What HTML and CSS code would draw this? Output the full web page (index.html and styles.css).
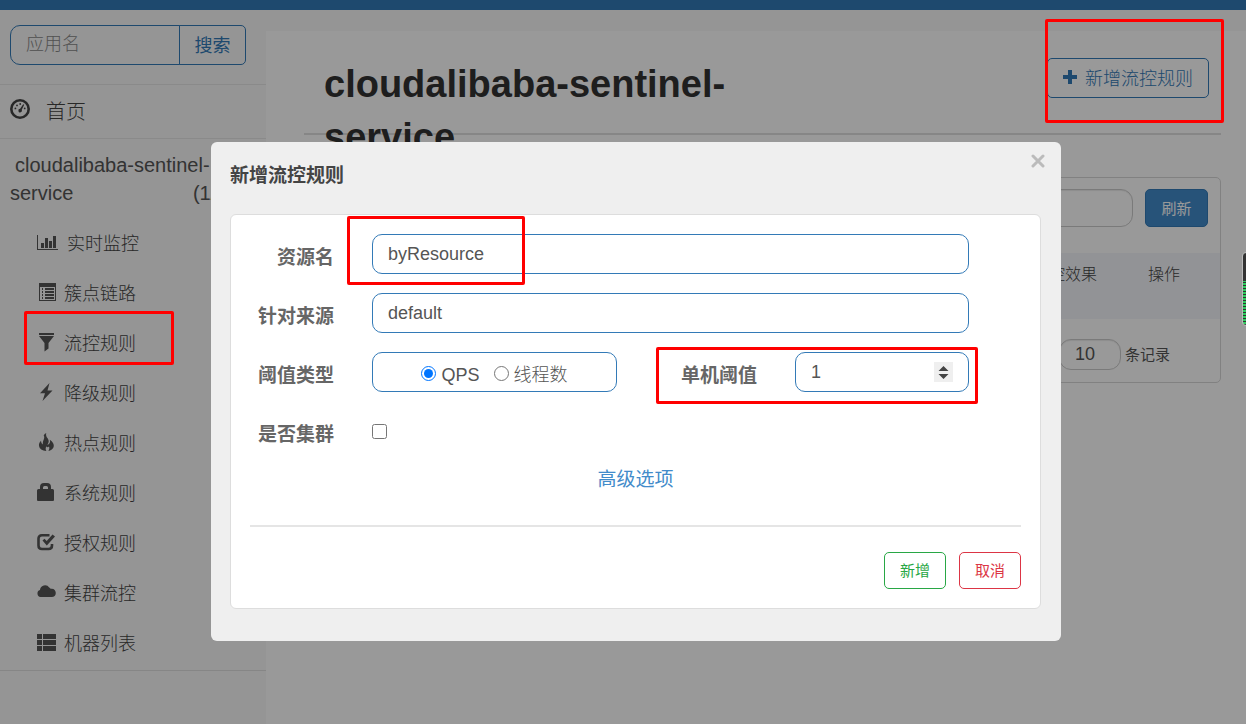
FILE: index.html
```html
<!DOCTYPE html>
<html lang="zh-CN">
<head>
  <meta charset="utf-8">
  <title>Sentinel Dashboard</title>
  <link rel="stylesheet" href="styles.css">
</head>
<body>

  <div class="topbar"></div>

  <div class="wrapper">
    <div class="sidebar">
      <form class="search">
        <input class="search-input" type="text" placeholder="应用名" aria-label="应用名">
        <button class="search-btn" type="button">搜索</button>
      </form>
      <a class="home" href="#">
        <svg class="icon-home" viewBox="0 0 20 20"><circle cx="10" cy="10" r="8.7" fill="none" stroke="currentColor" stroke-width="2.6"/><g fill="currentColor"><circle cx="5.400" cy="9.400" r=".9"/><circle cx="7" cy="6.400" r=".9"/><circle cx="10.200" cy="5" r=".9"/><circle cx="14.700" cy="9.400" r=".9"/><path d="M13.200 5.200l1 .6-2.400 5a1.800 1.800 0 1 1-1.700-1z"/></g></svg>
        <span>首页</span>
      </a>
      <a class="app" href="#">cloudalibaba-sentinel-service<span class="app-count">(1/1)</span></a>
      <ul class="menu">
        <li><a href="#"><svg class="icon wide" viewBox="0 0 21 18"><path fill="currentColor" d="M0 2h1v14H21V17H0zM4 10h3v5H4zM8 5h3v10H8zM12 8h3v7h-3zM16 3h3v12h-3z"/></svg>实时监控</a></li>
        <li><a href="#"><svg class="icon" viewBox="0 0 18 18"><path fill="currentColor" fill-rule="evenodd" d="M2 0h17v18H2zM3 4v13h15V4zM5 5h1v2H5zM8 5h9v2H8zM5 8h1v2H5zM8 8h9v2H8zM5 11h1v2H5zM8 11h9v2H8zM5 14h1v2H5zM8 14h9v2H8z"/></svg>簇点链路</a></li>
        <li><a href="#"><svg class="icon" viewBox="0 0 18 18"><path fill="currentColor" d="M2 0h15v2H2zM2 3h15l-5.500 7v5.500L7.500 18.500V10z"/></svg>流控规则</a></li>
        <li><a href="#"><svg class="icon" viewBox="0 0 18 18"><path fill="currentColor" d="M12.500 0L3 10.200h5L5.500 18 15.500 7.400h-5z"/></svg>降级规则</a></li>
        <li><a href="#"><svg class="icon" viewBox="0 0 18 18"><path fill="currentColor" d="M9.200 0c-.6 2.600.5 4 1.600 5.600 1.500 2.200 1 4.600-.5 6.200 2.200-.4 3.400-2.400 2.500-5 2.700 1.700 5 4.700 3.600 7.800-.9 2-2.700 3-5 3.400 1-1.400 1.200-2.800.6-4.400-1 1-2.300 1-2.600-.4-.9 1.600-1 3.300.1 4.800C5 17.600 2.500 16 2 13c-.4-2.600 1-4 2-5.200.3 1.600.5 2.900 1.800 3.700C5.500 7 8.400 5.500 6.700 2.500 7.200 1.300 8.200.5 9.200 0z"/></svg>热点规则</a></li>
        <li><a href="#"><svg class="icon" viewBox="0 0 18 18"><path fill="currentColor" fill-rule="evenodd" d="M3 6V4q0-4 4-4h3q4 0 4 4v2h1.500q1.500 0 1.500 1.500V17q0 1-1 1H1q-1 0-1-1V7.500Q0 6 1.500 6zM6 6h5V4.500Q11 3 9.500 3h-2Q6 3 6 4.500z"/></svg>系统规则</a></li>
        <li><a href="#"><svg class="icon" viewBox="0 0 18 18"><path fill="none" stroke="currentColor" stroke-width="2.600" d="M12.500 2.300H5Q1.500 2.300 1.500 5.500v7q0 3.500 3.500 3.500h6.500q3.500 0 3.500-3.500V11"/><path fill="currentColor" d="M5.500 7.500l2-1.800 2.200 2.200L15.500 1.600l2.500 2-8.200 8.800z"/></svg>授权规则</a></li>
        <li><a href="#"><svg class="icon" viewBox="0 0 18 18"><path fill="currentColor" d="M3.500 14A3.600 3.600 0 0 1 3 7 5 5 0 0 1 12.200 4.500a5.500 5.500 0 0 1 1.400 1.300c3-.8 5.200 1.500 5.200 4.100 0 2.400-1.700 4.100-4 4.100z"/></svg>集群流控</a></li>
        <li><a href="#"><svg class="icon" viewBox="0 0 18 18"><path fill="currentColor" d="M0 1h5v5H0zM6 1h13v5H6zM0 7h5v5H0zM6 7h13v5H6zM0 13h5v5H0zM6 13h13v5H6z"/></svg>机器列表</a></li>
      </ul>
    </div>

    <div class="main">
      <div class="page-head">
        <h1>cloudalibaba-sentinel-service</h1>
        <button class="btn-add" type="button">
          <svg class="icon-plus" viewBox="0 0 14 14"><path fill="currentColor" d="M5 0h4v5h5v4H9v5H5V9H0V5h5z"/></svg>
          新增流控规则
        </button>
      </div>
      <div class="card">
        <div class="card-head">
          <input class="gray-input" type="text" aria-label="关键字">
          <button class="btn-refresh" type="button">刷新</button>
        </div>
        <table class="rules">
          <thead>
            <tr><th></th><th class="col-effect">流控效果</th><th class="col-action">操作</th></tr>
          </thead>
        </table>
        <div class="card-foot">
          <input class="gray-input page-size" id="pageSize" type="text" value="10">
          <label for="pageSize">条记录</label>
        </div>
      </div>
    </div>
  </div>

  <div class="overlay">
    <div class="modal" role="dialog" aria-labelledby="modalTitle">
      <div class="modal-head">
        <h2 id="modalTitle">新增流控规则</h2>
        <button class="close" type="button" aria-label="关闭">
          <svg viewBox="0 0 14 14"><path fill="none" stroke="currentColor" stroke-width="3" stroke-linecap="round" d="M2 2l10 10M12 2L2 12"/></svg>
        </button>
      </div>
      <form class="panel">
        <div class="fields">
          <label class="name" for="resource">资源名</label>
          <input class="field full" id="resource" type="text" value="byResource">

          <label class="name" for="limitApp">针对来源</label>
          <input class="field full" id="limitApp" type="text" value="default">

          <span class="name">阈值类型</span>
          <div class="field radios">
            <input type="radio" name="grade" id="qps" checked><label for="qps">QPS</label>
            <input type="radio" name="grade" id="thread"><label for="thread">线程数</label>
          </div>
          <label class="name" for="count">单机阈值</label>
          <div class="field number">
            <input id="count" type="number" value="1">
            <button class="spin" type="button" aria-label="调整">
              <svg viewBox="0 0 19 20"><path fill="#444" d="M4.500 9l5-5 5 5zM4.500 12l5 5 5-5z"/></svg>
            </button>
          </div>

          <label class="name" for="cluster">是否集群</label>
          <input class="check" id="cluster" type="checkbox">
        </div>
        <a class="advanced" href="#">高级选项</a>
        <div class="panel-foot">
          <button class="btn green" type="button">新增</button>
          <button class="btn red" type="button">取消</button>
        </div>
      </form>
    </div>
  </div>

  <!-- red marks -->
  <div class="mark mark-menu"></div>
  <div class="mark mark-add"></div>
  <div class="mark mark-resource"></div>
  <div class="mark mark-count"></div>

  <div class="meter"></div>

</body>
</html>
```
FILE: styles.css
```css
* {
  box-sizing: border-box;
}

body {
  margin: 0;
  min-height: 100vh;
  display: flex;
  flex-direction: column;
  overflow: hidden;
  font-family: "Liberation Sans", "Noto Sans CJK SC", sans-serif;
  font-size: 18px;
  color: #555;
  background: #f8f8f8;
}

input, button {
  font: inherit;
}

a {
  color: inherit;
  text-decoration: none;
}

.topbar {
  height: 10px;
  background: #337ab7;
}

.wrapper {
  flex: 1;
  display: flex;
}

/* sidebar */
.sidebar {
  width: 266px;
  flex-shrink: 0;
  font-weight: 300;
  background: #f8f8f8;
}

.search {
  display: flex;
  height: 75px;
  padding: 15px 20px 19px 10px;
  border-bottom: 1px solid #e7e7e7;
}

.search-input {
  flex: 1;
  min-width: 0;
  height: 40px;
  padding: 0 15px 2px;
  border: 1px solid #337ab7;
  border-radius: 10px 0 0 10px;
  background: transparent;
}

.search-input::placeholder {
  color: #888;
}

.search-btn {
  width: 67px;
  height: 40px;
  margin-left: -1px;
  padding: 0 0 3px;
  border: 1px solid #337ab7;
  border-radius: 0 5px 5px 0;
  background: transparent;
  color: #337ab7;
  font-weight: 400;
}

.home {
  display: flex;
  align-items: center;
  gap: 16px;
  height: 54px;
  padding: 0 0 2px 10px;
  border-bottom: 1px solid #e7e7e7;
  font-size: 20px;
  color: #444;
}

.icon-home {
  width: 20px;
  height: 20px;
  margin-bottom: 4px;
}

.app {
  display: block;
  padding: 12px 32px 11px 10px;
  font-size: 20px;
  line-height: 28px;
  text-indent: 5px;
}

.app-count {
  float: right;
  text-indent: 0;
}

.menu {
  list-style: none;
  margin: 0;
  padding: 0 0 2px;
  border-bottom: 1px solid #e0e0e0;
  color: #444;
}

.menu a {
  display: flex;
  align-items: center;
  gap: 9px;
  height: 50px;
  padding: 0 0 2px 37px;
}

.icon {
  width: 18px;
  height: 18px;
  overflow: visible;
  color: #555;
}

.icon.wide {
  width: 21px;
}

/* main */
.main {
  flex: 1;
  min-width: 0;
  margin-top: 21px;
  padding: 0 25px 0 38px;
  background: #fff;
}

.page-head {
  display: flex;
  justify-content: space-between;
  align-items: flex-start;
  height: 104px;
  padding: 27px 12px 0 20px;
  border-bottom: 2px solid #e0e0e0;
}

h1 {
  width: 50%;
  margin: 0;
  font-size: 38px;
  line-height: 53px;
  font-weight: bold;
  color: #333;
}

.btn-add {
  display: flex;
  align-items: center;
  gap: 8px;
  height: 40px;
  padding: 0 15px 2px;
  border: 1px solid #337ab7;
  border-radius: 5px;
  background: #fff;
  color: #337ab7;
  font-weight: 300;
}

.icon-plus {
  width: 14px;
  height: 14px;
}

.card {
  margin-top: 42px;
  border: 1px solid #d8d8d8;
  border-radius: 5px;
}

.card-head {
  display: flex;
  justify-content: flex-end;
  gap: 12px;
  height: 75px;
  padding: 11px 12px;
}

.gray-input {
  width: 250px;
  height: 38px;
  padding: 0 15px;
  border: 1px solid #ccc;
  border-radius: 12px;
  background: #fff;
  box-shadow: inset 0 1px 1px rgba(0, 0, 0, 0.08);
  color: #555;
}

.btn-refresh {
  width: 63px;
  height: 38px;
  padding: 0 0 2px;
  border: 1px solid #337ab7;
  border-radius: 5px;
  background: #428bca;
  color: #fff;
  font-size: 15px;
}

.rules {
  width: 100%;
  border-collapse: collapse;
  background: #f3f6fa;
}

.rules th {
  height: 66px;
  padding: 8px 0 0;
  vertical-align: top;
  text-align: left;
  font-size: 16px;
  font-weight: 300;
  color: #444;
}

.rules .col-effect {
  width: 115px;
}

.rules .col-action {
  width: 72px;
}

.card-foot {
  display: flex;
  justify-content: flex-end;
  align-items: center;
  gap: 4px;
  padding: 20px 50px 12px;
  font-size: 15px;
}

.card-foot label {
  padding-bottom: 3px;
}

.page-size {
  width: 62px;
  height: 31px;
  font-size: 18px;
}

/* modal */
.overlay {
  position: fixed;
  inset: 0;
  padding: 142px 0 0 26px;
  background: rgba(0, 0, 0, 0.4);
}

.modal {
  width: 850px;
  max-width: 100%;
  margin: 0 auto;
  padding: 20px 20px 32px 19px;
  border-radius: 6px;
  background: #efefef;
}

.modal-head {
  display: flex;
  justify-content: space-between;
  height: 52px;
}

h2 {
  margin: 0;
  font-size: 19px;
  line-height: 27px;
  font-weight: bold;
  color: #444;
}

.close {
  width: 14px;
  height: 14px;
  margin-top: -8px;
  margin-right: -4px;
  padding: 0;
  border: 0;
  background: none;
  color: #bbb;
}

.close svg {
  display: block;
}

.panel {
  padding: 19px;
  border: 1px solid #ddd;
  border-radius: 6px;
  background: #fff;
}

.fields {
  display: grid;
  grid-template-columns: 84px 245px 1fr 174px;
  grid-auto-rows: 40px;
  gap: 19px 38px;
  align-items: center;
  padding-right: 52px;
}

.name {
  padding-top: 2px;
  text-align: right;
  font-size: 19px;
  font-weight: bold;
  color: #666;
}

.field {
  width: 100%;
  height: 40px;
  padding: 0 15px;
  border: 1px solid #337ab7;
  border-radius: 10px;
  background: #fff;
  color: #555;
}

.full {
  grid-column: 2 / 5;
}

.radios {
  display: flex;
  justify-content: center;
  align-items: center;
  gap: 5px;
  padding-top: 2px;
  font-weight: 300;
}

.radios input,
.check {
  width: 15px;
  height: 15px;
  margin: 0;
}

.radios label {
  line-height: 28px;
  padding-top: 3px;
}

.radios label:first-of-type {
  margin-right: 9px;
}

.number {
  display: flex;
  align-items: center;
}

.number input {
  flex: 1;
  min-width: 0;
  padding: 0;
  border: 0;
  background: none;
  color: inherit;
  appearance: textfield;
}

.number input::-webkit-inner-spin-button {
  display: none;
}

.spin {
  width: 19px;
  height: 20px;
  padding: 0;
  border: 0;
  background: #efefef;
}

.spin svg {
  display: block;
}

.advanced {
  display: block;
  height: 54px;
  margin-top: 15px;
  margin-bottom: 5px;
  text-align: center;
  font-size: 19px;
  line-height: 28px;
  color: #428bca;
}

.panel-foot {
  display: flex;
  justify-content: flex-end;
  gap: 13px;
  padding-top: 25px;
  border-top: 2px solid #e5e5e5;
}

.btn {
  width: 62px;
  height: 37px;
  padding: 0 0 2px;
  border: 1px solid;
  border-radius: 5px;
  background: #fff;
  font-size: 15px;
}

.green {
  color: #28a745;
}

.red {
  color: #dc3545;
}

/* marks drawn over the page */
.mark {
  position: fixed;
  border: 3px solid #f00;
  border-radius: 2px;
  pointer-events: none;
}

.mark-menu {
  left: 24px;
  top: 311px;
  width: 150px;
  height: 54px;
}

.mark-add {
  left: 1045px;
  top: 19px;
  width: 179px;
  height: 104px;
}

.mark-resource {
  left: 347px;
  top: 216px;
  width: 178px;
  height: 69px;
}

.mark-count {
  left: 656px;
  top: 347px;
  width: 322px;
  height: 57px;
}

.meter {
  position: fixed;
  right: -4px;
  top: 252px;
  width: 8px;
  height: 74px;
  border: 1px solid #bbb;
  border-radius: 4px;
  background: linear-gradient(#333 28px, transparent 28px), repeating-linear-gradient(#2ecc5e 0 2px, #333 2px 3px);
}
```
